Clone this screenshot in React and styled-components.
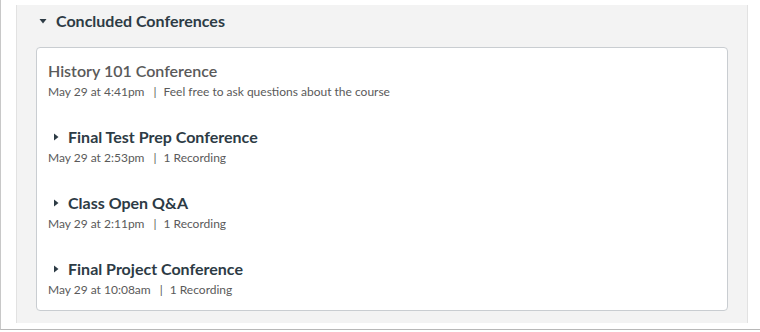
import styled, { createGlobalStyle } from "styled-components";

const GlobalStyle = createGlobalStyle`
  html, body {
    margin: 0;
    padding: 0;
    background: #ffffff;
  }
  body {
    font-family: Lato, "Liberation Sans", sans-serif;
    color: #2d3b45;
  }
`;

const conferences = [
  {
    title: "History 101 Conference",
    date: "May 29 at 4:41pm",
    note: "Feel free to ask questions about the course",
    expandable: false,
  },
  {
    title: "Final Test Prep Conference",
    date: "May 29 at 2:53pm",
    note: "1 Recording",
    expandable: true,
  },
  {
    title: "Class Open Q&A",
    date: "May 29 at 2:11pm",
    note: "1 Recording",
    expandable: true,
  },
  {
    title: "Final Project Conference",
    date: "May 29 at 10:08am",
    note: "1 Recording",
    expandable: true,
  },
];

const Caret = ({ down }) => (
  <svg width="8" height="8" viewBox="0 0 8 8">
    {down ? (
      <polygon points="0.5,2 7.5,2 4,6.5" fill="#2d3b45" />
    ) : (
      <polygon points="2,0.5 6.5,4 2,7.5" fill="#2d3b45" />
    )}
  </svg>
);

const App = () => {
  return (
    <>
      <GlobalStyle />
      <StFrame>
        <StPanel>
          <StSectionHeader>
            <Caret down />
            <span>Concluded Conferences</span>
          </StSectionHeader>
          <StCard>
            {conferences.map((item) => (
              <StItem key={item.title}>
                <StTitle $expandable={item.expandable}>
                  {item.expandable && <Caret />}
                  <span>{item.title}</span>
                </StTitle>
                <StMeta>
                  {item.date}
                  <StDivider>|</StDivider>
                  {item.note}
                </StMeta>
              </StItem>
            ))}
          </StCard>
        </StPanel>
      </StFrame>
    </>
  );
};

export default App;

const StFrame = styled.div`
  width: 780px;
  height: 330px;
  box-sizing: border-box;
  border-left: 1px solid #c8c8c8;
  border-bottom: 1px solid #b8b8b8;
  box-shadow: 0 1px 2px rgba(0, 0, 0, 0.18);
  background: #ffffff;
  padding: 5px 0 6px 15px;
`;

const StPanel = styled.div`
  width: 732px;
  height: 100%;
  box-sizing: border-box;
  background: #f3f3f3;
  border-left: 1px solid #e2e2e2;
  border-right: 1px solid #e2e2e2;
  padding: 0 19px 0 19px;
  display: flex;
  flex-direction: column;
`;

const StSectionHeader = styled.div`
  height: 42px;
  box-sizing: border-box;
  display: flex;
  align-items: flex-start;
  gap: 9px;
  padding: 5px 0 0 3px;
  font-size: 16px;
  line-height: 22px;
  font-weight: 700;
  color: #2d3b45;
  svg {
    margin-top: 7px;
  }
`;

const StCard = styled.div`
  background: #ffffff;
  border: 1px solid #c9cdd1;
  border-radius: 4px;
  box-sizing: border-box;
  height: 264px;
  padding: 12px 11px 0;
  display: flex;
  flex-direction: column;
  gap: 26px;
`;

const StItem = styled.div`
  display: flex;
  flex-direction: column;
  gap: 2px;
`;

const StTitle = styled.div`
  display: flex;
  align-items: center;
  gap: 8px;
  padding-left: ${(p) => (p.$expandable ? "4px" : "0")};
  font-size: 16px;
  line-height: 22px;
  font-weight: ${(p) => (p.$expandable ? 700 : 600)};
  color: ${(p) => (p.$expandable ? "#2d3b45" : "#5a5a5a")};
`;

const StMeta = styled.div`
  font-size: 12px;
  line-height: 16px;
  color: #5a5a5a;
`;

const StDivider = styled.span`
  margin: 0 7px 0 9px;
`;
